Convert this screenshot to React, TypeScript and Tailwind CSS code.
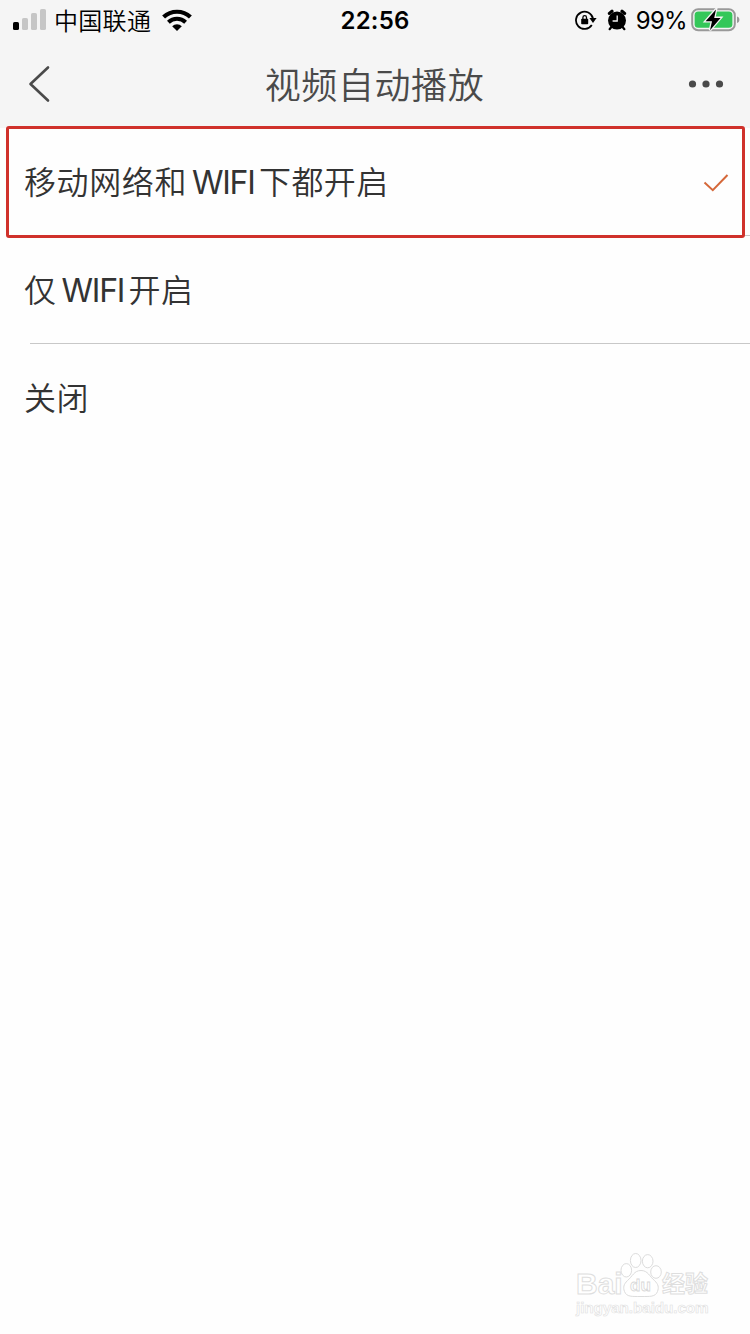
import React from "react";

type Option = {
  parts: { text: string; className: string }[];
  selected?: boolean;
};

const options: Option[] = [
  {
    parts: [
      { text: "移动网络和", className: "tracking-[0.6px]" },
      { text: "WIFI", className: "ml-[5px] w-[67px] font-normal tracking-[-1.3px]" },
      { text: "下都开启", className: "tracking-[0.4px]" },
    ],
    selected: true,
  },
  {
    parts: [
      { text: "仅", className: "tracking-[0.6px]" },
      { text: "WIFI", className: "ml-[5px] w-[67px] font-normal tracking-[-1.3px]" },
      { text: "开启", className: "tracking-[0.4px]" },
    ],
  },
  { parts: [{ text: "关闭", className: "tracking-[0.6px]" }] },
];

const SignalIcon = () => (
  <svg width="34" height="22" viewBox="0 0 34 22" className="shrink-0">
    <rect x="0" y="13" width="6" height="8" rx="1.6" fill="#000" />
    <rect x="9" y="9" width="6" height="12" rx="1.6" fill="#c6c6c6" />
    <rect x="18" y="4" width="6" height="17" rx="1.6" fill="#c6c6c6" />
    <rect x="27" y="0" width="6" height="21" rx="1.6" fill="#c6c6c6" />
  </svg>
);

const WifiIcon = () => (
  <svg width="30" height="22" viewBox="0 0 30 22" fill="none" stroke="#000">
    <path d="M1.6 8.1A19.4 19.4 0 0 1 28.4 8.1" strokeWidth="4.2" />
    <path d="M6.4 13.2A12.4 12.4 0 0 1 23.6 13.2" strokeWidth="4" />
    <path d="M10.2 17.2A6.8 6.8 0 0 1 19.8 17.2L15 21.9Z" fill="#000" stroke="none" />
  </svg>
);

const RotationLockIcon = () => (
  <svg width="22" height="20" viewBox="0 0 22 20" fill="none">
    <path d="M18 8.5A8.6 8.6 0 1 0 16.8 15" stroke="#000" strokeWidth="1.8" />
    <path d="M14.4 8H21.6L18 13Z" fill="#000" />
    <rect x="6.2" y="8.8" width="7" height="5.4" rx="0.8" fill="#000" />
    <path d="M7.9 9V7.4a1.8 1.8 0 0 1 3.6 0V9" stroke="#000" strokeWidth="1.3" />
  </svg>
);

const AlarmIcon = () => (
  <svg width="20" height="22" viewBox="0 0 20 22" fill="none">
    <circle cx="10" cy="11.6" r="9" fill="#000" />
    <path d="M2.4 4.4L5 2.2M17.6 4.4L15 2.2" stroke="#000" strokeWidth="3.2" strokeLinecap="round" />
    <path d="M4.4 18L2.6 20.2M15.6 18L17.4 20.2" stroke="#000" strokeWidth="2.2" strokeLinecap="round" />
    <path d="M10.2 6.4V12H5.6" stroke="#f5f5f5" strokeWidth="1.3" />
  </svg>
);

const BatteryIcon = () => (
  <svg width="49" height="24" viewBox="0 0 49 24" fill="none">
    <rect x="1.2" y="1.2" width="42.6" height="21" rx="6" stroke="#999" strokeWidth="2" />
    <rect x="3.6" y="3.6" width="37.8" height="16.2" rx="3.6" fill="#34c759" />
    <path d="M46 8.4c1.8.6 2.4 1.8 2.4 3.3S47.8 14.4 46 15Z" fill="#999" />
    <path
      d="M25 1.4L14.6 13.3H21L19 22.2L29.6 9.9H23.2Z"
      fill="#000"
      stroke="#f5f5f5"
      strokeWidth="2.6"
      paintOrder="stroke"
    />
  </svg>
);

const StatusBar = () => (
  <div className="flex h-10 items-center justify-between text-black">
    <div className="flex w-[250px] items-center pl-[13px]">
      <SignalIcon />
      <span className="mt-[3px] ml-[7px] w-[108px] text-[24px] leading-none font-[350] tracking-[0.3px]">
        中国联通
      </span>
      <WifiIcon />
    </div>
    <span className="pt-0.5 text-[24px] leading-none font-semibold tracking-[0.2px]">22:56</span>
    <div className="flex w-[250px] items-center justify-end pr-[10px]">
      <RotationLockIcon />
      <span className="ml-[10px]">
        <AlarmIcon />
      </span>
      <span className="mr-1 ml-[9px] pt-0.5 text-[24px] leading-none tracking-[-0.7px]">99%</span>
      <BatteryIcon />
    </div>
  </div>
);

const NavBar = () => (
  <div className="flex h-[88px] items-center justify-between pr-[26px] pl-[28px] text-[#4a4a4a]">
    <svg width="33" height="38" viewBox="0 0 33 38" fill="none" stroke="currentColor">
      <path
        d="M20 2.5L2.5 19L20 35.5"
        strokeWidth="2.6"
        strokeLinecap="round"
        strokeLinejoin="round"
      />
    </svg>
    <h1 className="pt-1 text-[36px] leading-none font-[350] tracking-[0.6px]">视频自动播放</h1>
    <svg width="36" height="8" viewBox="0 0 36 8" fill="currentColor">
      <circle cx="4.5" cy="4" r="3.6" />
      <circle cx="18" cy="4" r="3.6" />
      <circle cx="31.5" cy="4" r="3.6" />
    </svg>
  </div>
);

const OptionRow: React.FC<{ option: Option; last: boolean }> = ({ option, last }) => (
  <li className="relative flex h-[108px] flex-col">
    <div className="flex flex-1 items-center justify-between pt-0.5 pr-[21px] pl-6">
      <div className="flex text-[32px] leading-none font-[350] text-[#333]">
        {option.parts.map((part) => (
          <span key={part.text} className={part.className}>
            {part.text}
          </span>
        ))}
      </div>
      {option.selected && (
        <svg width="26" height="20" viewBox="0 0 26 20" fill="none">
          <path d="M1.5 9.5L9.8 17.2L24.5 2" stroke="#d5683a" strokeWidth="2" />
        </svg>
      )}
    </div>
    {!last && <div className="ml-[30px] h-px bg-[#c8c8c8]" />}
    {option.selected && (
      <div className="absolute -top-0.5 right-[5px] -bottom-0.5 left-[6px] rounded-[3px] border-3 border-[#d0312b]" />
    )}
  </li>
);

const Watermark = () => (
  <div className="mt-auto mr-[38px] mb-[16px] flex w-[136px] flex-col self-end font-['Liberation_Sans','Noto_Sans_CJK_SC',sans-serif] font-bold text-white [-webkit-text-stroke:1px_#dedede]">
    <div className="flex h-[46px] items-end">
      <span className="w-[44px] text-[30px] leading-[28px]">Bai</span>
      <div className="relative h-[46px] w-[42px]">
        <svg width="42" height="46" viewBox="0 0 42 46" fill="#fff" stroke="#dcdcdc">
          <ellipse cx="6.3" cy="18.3" rx="5.3" ry="6.7" />
          <ellipse cx="15.7" cy="8.5" rx="5.3" ry="7" />
          <ellipse cx="27.7" cy="9.2" rx="5.3" ry="6.6" />
          <ellipse cx="36" cy="20" rx="5.3" ry="6.3" />
          <path d="M21 18.5c-7 0-8.5 6-13.5 10c-4 4-4.5 7-3 11c2 5.500 7.500 5 16.500 5s14.500 .5 16.500-5c1.500-4 1-7-3-11c-5-4-6.500-10-13.500-10Z" />
        </svg>
        <span className="absolute top-[22px] left-[10px] text-[17px] leading-[24px] [-webkit-text-stroke:0.8px_#d8d8d8]">
          du
        </span>
      </div>
      <span className="text-[23px] leading-[28px]">经验</span>
    </div>
    <span className="text-[15.3px] leading-[20px] tracking-[-0.1px] [-webkit-text-stroke:0.6px_#e0e0e0]">
      jingyan.baidu.com
    </span>
  </div>
);

export default function App() {
  return (
    <div className="flex h-[1334px] w-[750px] flex-col overflow-hidden bg-[#fefefe] font-[Inter,'Noto_Sans_CJK_SC',sans-serif]">
      <header className="bg-[#f5f5f5]">
        <StatusBar />
        <NavBar />
      </header>
      <ul>
        {options.map((option, index) => (
          <OptionRow key={index} option={option} last={index === options.length - 1} />
        ))}
      </ul>
      <Watermark />
    </div>
  );
}
